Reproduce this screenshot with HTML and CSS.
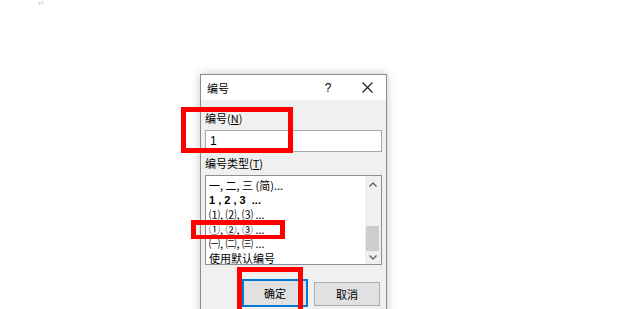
FILE: index.html
```html
<!DOCTYPE html>
<html lang="zh-CN">
  <head>
    <meta charset="UTF-8" />
    <title>编号</title>
    <link rel="stylesheet" href="styles.css">
  </head>

  <body>
    <div class="paraMark">↵</div>

    <div class="dialog">
      <div class="titleBar">
        <div class="titleName">编号</div>
        <div class="titleHelp">?</div>
        <div class="titleClose">
          <svg width="11" height="11" viewBox="0 0 11 11">
            <path d="M0.5 0.5 L10.5 10.5 M10.5 0.5 L0.5 10.5" stroke="#1a1a1a" stroke-width="1.1" fill="none" />
          </svg>
        </div>
      </div>

      <div class="dialogBody">
        <div class="fieldLabel">编号(<u>N</u>)</div>
        <div class="textBox">1</div>

        <div class="fieldLabel gapTop">编号类型(<u>T</u>)</div>
        <div class="listBox">
          <ul class="listItems">
            <li>一, 二, 三 (简)...</li>
            <li class="digits">1 , 2 , 3&nbsp; ...</li>
            <li>⑴, ⑵, ⑶ ...</li>
            <li>①, ②, ③ ...</li>
            <li>㈠, ㈡, ㈢ ...</li>
            <li>使用默认编号</li>
          </ul>
          <div class="scrollBar">
            <div class="scrollUp">
              <svg width="8" height="5" viewBox="0 0 8 5">
                <path d="M0.5 4.5 L4 1 L7.5 4.5" stroke="#606060" stroke-width="1.4" fill="none" />
              </svg>
            </div>
            <div class="scrollTrack">
              <div class="scrollThumb"></div>
            </div>
            <div class="scrollDown">
              <svg width="8" height="5" viewBox="0 0 8 5">
                <path d="M0.5 0.5 L4 4 L7.5 0.5" stroke="#606060" stroke-width="1.4" fill="none" />
              </svg>
            </div>
          </div>
        </div>

        <div class="buttonRow">
          <div class="btn btnDefault">确定</div>
          <div class="btn btnCancel">取消</div>
        </div>
      </div>
    </div>

    <!-- 标注框 -->
    <div class="markBox markNumber"></div>
    <div class="markBox markType"></div>
    <div class="markBox markOk"></div>
  </body>
</html>
```

FILE: styles.css
```css
body,
ul,
li {
  margin: 0;
  padding: 0;
}

ul,
li {
  list-style: none;
}

body {
  width: 620px;
  height: 309px;
  overflow: hidden;
  background: #ffffff;
  font-family: "Noto Sans CJK SC", "Liberation Sans", sans-serif;
  font-size: 11px;
  color: #000000;
}

.paraMark {
  position: absolute;
  left: 38px;
  top: 0px;
  font-family: "DejaVu Sans", sans-serif;
  font-size: 8px;
  line-height: 8px;
  color: #c8c8c8;
}

.dialog {
  position: absolute;
  left: 200px;
  top: 74px;
  width: 187px;
  height: 260px;
  box-sizing: border-box;
  border: 1px solid #8c8c8c;
  background: #f0f0f0;
  box-shadow: 0px 0px 9px rgba(0, 0, 0, 0.22);
}

.titleBar {
  display: flex;
  align-items: center;
  height: 25px;
  background: #ffffff;
}

.titleName {
  flex: 1;
  padding-left: 6px;
  line-height: 16px;
}

.titleHelp {
  width: 40px;
  text-align: center;
  font-family: "Liberation Sans", sans-serif;
  font-size: 12px;
}

.titleClose {
  display: flex;
  justify-content: center;
  align-items: center;
  width: 38px;
}

.dialogBody {
  padding: 10px 4px 0 4px;
}

.fieldLabel {
  line-height: 16px;
}

.gapTop {
  margin-top: 3px;
}

.textBox {
  margin-top: 4px;
  height: 22px;
  box-sizing: border-box;
  border: 1px solid #a8a8a8;
  background: #ffffff;
  padding-left: 4px;
  line-height: 20px;
  font-family: "Liberation Sans", sans-serif;
  font-size: 12px;
}

.listBox {
  display: flex;
  margin-top: 4px;
  height: 90px;
  box-sizing: border-box;
  border: 1px solid #8a8d93;
  background: #ffffff;
}

.listItems {
  flex: 1;
  padding: 2px 0 0 3px;
}

.listItems li {
  height: 14.6px;
  line-height: 14.6px;
  white-space: nowrap;
}

.digits {
  font-weight: bold;
  font-family: "Liberation Sans", sans-serif;
}

.scrollBar {
  display: flex;
  flex-direction: column;
  width: 16px;
  background: #f0f0f0;
}

.scrollUp {
  display: flex;
  justify-content: center;
  align-items: center;
  height: 17px;
}

.scrollTrack {
  flex: 1;
  display: flex;
  flex-direction: column;
  justify-content: flex-end;
}

.scrollThumb {
  height: 25px;
  margin: 0 2px 0 1px;
  background: #cdcdcd;
}

.scrollDown {
  display: flex;
  justify-content: center;
  align-items: center;
  height: 13px;
}

.buttonRow {
  display: flex;
  align-items: flex-start;
  margin-top: 14px;
  padding-left: 37px;
  gap: 6px;
}

.btn {
  width: 66px;
  box-sizing: border-box;
  text-align: center;
  background: #e1e1e1;
}

.btnDefault {
  height: 28px;
  line-height: 24px;
  border: 2px solid #0078d7;
}

.btnCancel {
  margin-top: 3px;
  height: 24px;
  line-height: 22px;
  border: 1px solid #adadad;
}

.markBox {
  position: absolute;
  box-sizing: border-box;
  border: 5px solid #ff0000;
}

.markNumber {
  left: 181px;
  top: 107px;
  width: 112px;
  height: 46px;
}

.markType {
  left: 191px;
  top: 220px;
  width: 94px;
  height: 19px;
  border-width: 5px 5px 4px 5px;
}

.markOk {
  left: 237px;
  top: 267px;
  width: 66px;
  height: 50px;
}
```
